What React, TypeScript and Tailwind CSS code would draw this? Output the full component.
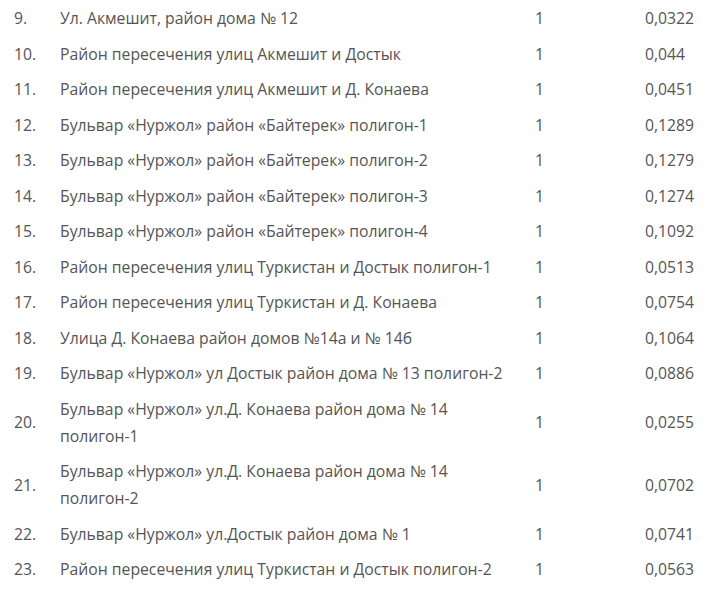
import React from 'react';

interface Row {
    n: number;
    name: React.ReactNode;
    qty: string;
    area: string;
}

const rows: Row[] = [
    { n: 9, name: 'Ул. Акмешит, район дома № 12', qty: '1', area: '0,0322' },
    { n: 10, name: 'Район пересечения улиц Акмешит и Достык', qty: '1', area: '0,044' },
    { n: 11, name: 'Район пересечения улиц Акмешит и Д. Конаева', qty: '1', area: '0,0451' },
    { n: 12, name: 'Бульвар «Нуржол» район «Байтерек» полигон-1', qty: '1', area: '0,1289' },
    { n: 13, name: 'Бульвар «Нуржол» район «Байтерек» полигон-2', qty: '1', area: '0,1279' },
    { n: 14, name: 'Бульвар «Нуржол» район «Байтерек» полигон-3', qty: '1', area: '0,1274' },
    { n: 15, name: 'Бульвар «Нуржол» район «Байтерек» полигон-4', qty: '1', area: '0,1092' },
    { n: 16, name: 'Район пересечения улиц Туркистан и Достык полигон-1', qty: '1', area: '0,0513' },
    { n: 17, name: 'Район пересечения улиц Туркистан и Д. Конаева', qty: '1', area: '0,0754' },
    { n: 18, name: 'Улица Д. Конаева район домов №14а и № 14б', qty: '1', area: '0,1064' },
    { n: 19, name: 'Бульвар «Нуржол» ул Достык район дома № 13 полигон-2', qty: '1', area: '0,0886' },
    {
        n: 20,
        name: (
            <>
                Бульвар «Нуржол» ул.Д. Конаева район дома № 14
                <br />
                полигон-1
            </>
        ),
        qty: '1',
        area: '0,0255',
    },
    {
        n: 21,
        name: (
            <>
                Бульвар «Нуржол» ул.Д. Конаева район дома № 14
                <br />
                полигон-2
            </>
        ),
        qty: '1',
        area: '0,0702',
    },
    { n: 22, name: 'Бульвар «Нуржол» ул.Достык район дома № 1', qty: '1', area: '0,0741' },
    { n: 23, name: 'Район пересечения улиц Туркистан и Достык полигон-2', qty: '1', area: '0,0563' },
];

const App: React.FC = () => {
    return (
        <div
            className="w-[705px] h-[599px] bg-white overflow-hidden pt-[1px] text-[15.75px] leading-[27px] text-[#555]"
            style={{ fontFamily: '"Open Sans", "Liberation Sans", sans-serif' }}
        >
            {rows.map(row => (
                <div
                    key={row.n}
                    className="grid grid-cols-[60px_475px_110px_1fr] items-center py-[4.25px]"
                >
                    <div className="pl-[14px]">{row.n}.</div>
                    <div>{row.name}</div>
                    <div>{row.qty}</div>
                    <div>{row.area}</div>
                </div>
            ))}
        </div>
    );
};

export default App;
